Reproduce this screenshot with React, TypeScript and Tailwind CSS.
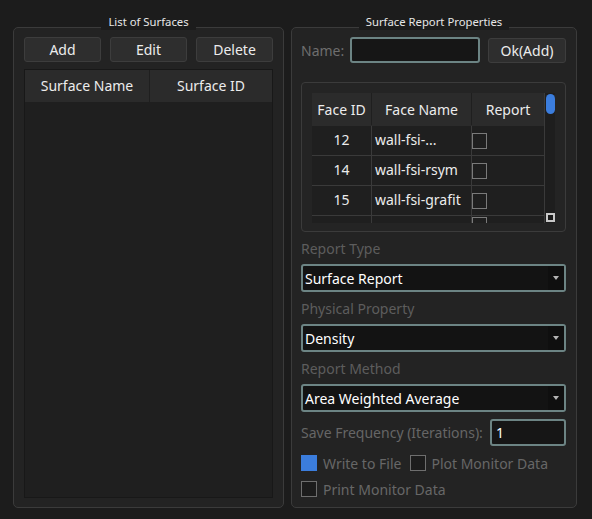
import React from "react";

const FONT = { fontFamily: '"Noto Sans", "Open Sans", sans-serif' };

const FACES = [
  { id: "12", name: "wall-fsi-..." },
  { id: "14", name: "wall-fsi-rsym" },
  { id: "15", name: "wall-fsi-grafit" },
];

function GroupBox({
  title,
  className,
  children,
}: {
  title: string;
  className?: string;
  children: React.ReactNode;
}) {
  return (
    <div
      className={`relative rounded-[5px] border border-[#3b3b3b] bg-[#232323] ${className ?? ""}`}
    >
      {/* title sits over the top border */}
      <div className="absolute left-0 right-0 -top-[14px] flex justify-center">
        <span className="bg-[#1c1c1c] px-[7px] text-[11.3px] leading-[16px] text-[#e6e6e6]">
          {title}
        </span>
      </div>
      {children}
    </div>
  );
}

function Button({ label, className }: { label: string; className?: string }) {
  return (
    <button
      className={`flex h-[25px] items-center justify-center rounded-[3px] border border-[#3d3d3d] bg-[#2e2e2e] text-[14px] text-[#ececec] ${className ?? ""}`}
    >
      {label}
    </button>
  );
}

function Combo({ value }: { value: string }) {
  return (
    <div className="flex h-[28px] w-[265px] items-stretch rounded-[3px] border-2 border-[#6c8484] bg-[#131313]">
      <div className="flex flex-1 items-center pl-[2px] text-[14px] text-white">
        {value}
      </div>
      <div className="flex w-[16px] items-center justify-center bg-[#0f0f0f]">
        <div className="h-0 w-0 border-x-[3.5px] border-t-[4px] border-x-transparent border-t-[#b4b4b4]" />
      </div>
    </div>
  );
}

function Check({ checked }: { checked?: boolean }) {
  return checked ? (
    <div className="h-[16px] w-[16px] bg-[#3b7ddd]" />
  ) : (
    <div className="h-[16px] w-[16px] border border-[#6e6e6e] bg-[#1c1c1c]" />
  );
}

export default function App() {
  return (
    <div
      className="flex h-[519px] w-[592px] gap-[7px] bg-[#1c1c1c] pl-[13px] pt-[27px]"
      style={FONT}
    >
      {/* List of Surfaces */}
      <GroupBox title="List of Surfaces" className="flex h-[481px] w-[271px] flex-col px-[10px] pb-[9px] pt-[9px]">
        <div className="flex gap-[9px]">
          <Button label="Add" className="w-[77px]" />
          <Button label="Edit" className="w-[77px]" />
          <Button label="Delete" className="w-[77px]" />
        </div>
        <div className="mt-[7px] flex flex-1 flex-col border border-[#181818] bg-[#1f1f1f]">
          <div className="flex h-[32px] bg-[#2b2b2b] text-[14px] text-[#ececec]">
            <div className="flex w-[125px] items-center justify-center border-r border-[#1f1f1f] pb-[1px]">
              Surface Name
            </div>
            <div className="flex flex-1 items-center justify-center pb-[1px]">Surface ID</div>
          </div>
        </div>
      </GroupBox>

      {/* Surface Report Properties */}
      <GroupBox title="Surface Report Properties" className="flex h-[481px] w-[286px] flex-col pl-[9px] pr-[10px] pt-[9px]">
        <div className="flex h-[26px] items-center">
          <span className="w-[49px] text-[14px] text-[#6e6e6e]">Name:</span>
          <div className="h-[26px] w-[130px] rounded-[3px] border-2 border-[#6c8484] bg-[#161616]" />
          <Button label="Ok(Add)" className="ml-[8px] w-[78px]" />
        </div>

        {/* faces frame */}
        <div className="mt-[19px] h-[150px] w-[265px] rounded-[4px] border border-[#3b3b3b] bg-[#242424] p-[10px]">
          <div className="flex h-[130px] overflow-hidden bg-[#1f1f1f]">
            <div className="flex w-[233px] flex-col text-[14px] text-[#ececec]">
              <div className="flex h-[33px] shrink-0 bg-[#2b2b2b] pb-[1px]">
                <div className="flex w-[60px] items-center justify-center border-r border-[#1f1f1f]">Face ID</div>
                <div className="flex w-[100px] items-center justify-center border-r border-[#1f1f1f]">Face Name</div>
                <div className="flex flex-1 items-center justify-center">Report</div>
              </div>
              {FACES.map((f) => (
                <div key={f.id} className="flex h-[30px] shrink-0 border-b border-[#3a3a3a]">
                  <div className="flex w-[60px] items-center justify-center border-r border-[#3a3a3a] pb-[2px]">{f.id}</div>
                  <div className="flex w-[100px] items-center border-r border-[#3a3a3a] pb-[2px] pl-[3px]">{f.name}</div>
                  <div className="flex flex-1 items-center">
                    <div className="h-[16px] w-[15px] border border-[#7a7a7a] bg-[#1f1f1f]" />
                  </div>
                </div>
              ))}
              <div className="flex h-[30px] shrink-0">
                <div className="w-[60px] border-r border-[#3a3a3a]" />
                <div className="w-[100px] border-r border-[#3a3a3a]" />
                <div className="flex-1 pt-[1px]">
                  <div className="h-[16px] w-[15px] border border-[#7a7a7a]" />
                </div>
              </div>
            </div>
            {/* scrollbar */}
            <div className="flex w-[11px] flex-col justify-between border-l border-[#3a3a3a] bg-[#1e1e1e] p-[1px]">
              <div className="h-[20px] w-[9px] rounded-full bg-[#3b7ddd]" />
              <div className="h-[9px] w-[9px] border-2 border-[#c8c8c8] bg-[#1a1a1a]" />
            </div>
          </div>
        </div>

        <div className="mt-[6px] flex h-[20px] items-center text-[14px] text-[#5d5d5d]">Report Type</div>
        <div className="mt-[6px]"><Combo value="Surface Report" /></div>
        <div className="mt-[6px] flex h-[20px] items-center text-[14px] text-[#5d5d5d]">Physical Property</div>
        <div className="mt-[6px]"><Combo value="Density" /></div>
        <div className="mt-[6px] flex h-[20px] items-center text-[14px] text-[#5d5d5d]">Report Method</div>
        <div className="mt-[6px]"><Combo value="Area Weighted Average" /></div>

        <div className="mt-[7px] flex h-[27px] items-center">
          <span className="w-[189px] text-[14px] text-[#666666]">Save Frequency (Iterations):</span>
          <div className="flex h-[27px] w-[76px] items-center rounded-[3px] border-2 border-[#6c8484] bg-[#161616] pl-[4px] text-[14px] text-white">
            1
          </div>
        </div>

        <div className="mt-[7px] flex h-[20px] items-center text-[14px] text-[#676767]">
          <Check checked />
          <span className="ml-[6px]">Write to File</span>
          <div className="ml-[9px]"><Check /></div>
          <span className="ml-[5px]">Plot Monitor Data</span>
        </div>
        <div className="mt-[6px] flex h-[20px] items-center text-[14px] text-[#676767]">
          <Check />
          <span className="ml-[6px]">Print Monitor Data</span>
        </div>
      </GroupBox>
    </div>
  );
}
